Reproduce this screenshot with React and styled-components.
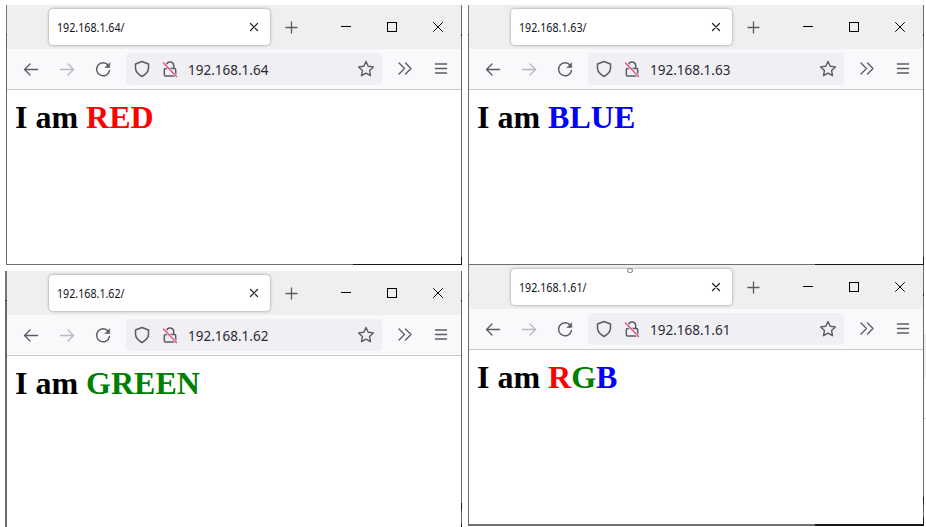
import React from "react";
import styled, { createGlobalStyle } from "styled-components";

const GlobalStyle = createGlobalStyle`
  body { margin: 0; background: #fff; overflow: hidden; }
  * { box-sizing: border-box; }
`;

const Desktop = styled.main`
  display: flex;
  width: 926px;
  height: 527px;
  padding-top: 5px;
  overflow: hidden;
  background: #fff;
`;

const Column = styled.div`
  display: flex;
  flex-direction: column;
  align-items: flex-end;
  width: ${(p) => p.$width}px;
  gap: ${(p) => p.$gap || 0}px;
  flex: none;

  & + & { margin-left: 6px; }
`;

const BackgroundSliver = styled.div`
  width: 2px;
  height: 85px;
  margin-top: 329px;
  border-bottom: 1px solid #cfcfd2;
  background: linear-gradient(#efefef 44px, #f9f9fb 44px);
`;

const WindowFrame = styled.section`
  display: flex;
  flex: none;
  width: ${(p) => 455 + p.$left}px;
  height: ${(p) => p.$height}px;
`;

const LeftEdge = styled.div`
  flex: none;
  width: ${(p) => p.$size}px;
  background: linear-gradient(#77777b 29px, #333 29px, #333 30px, #6a6a6e 30px);
`;

const RightEdge = styled.div`
  flex: none;
  width: 1px;
  background: ${(p) =>
    p.$low
      ? "linear-gradient(#6a6a6e 29px, #222 29px, #222 31px, #6a6a6e 31px, #6a6a6e 232px, #18181c 232px, #18181c 237px, #6a6a6e 242px, #6a6a6e 252px, #18181c 253px)"
      : "linear-gradient(#6a6a6e 29px, #222 29px, #222 31px, #6a6a6e 31px, #6a6a6e 252px, #18181c 252px)"};
`;

const WindowBody = styled.div`
  display: flex;
  flex-direction: column;
  width: 454px;
  background: #fff;
`;

const TabBar = styled.header`
  position: relative;
  display: flex;
  align-items: center;
  flex: none;
  height: 44px;
  padding-left: 42px;
  background: #efefef;
`;

const Tab = styled.div`
  display: flex;
  align-items: center;
  justify-content: space-between;
  width: 222px;
  height: 36px;
  padding: 0 6px 0 8px;
  border-radius: 4px;
  background: #fff;
  box-shadow: 0 0 3px rgba(0, 0, 0, 0.42);
`;

const TabTitle = styled.span`
  padding-top: 1px;
  color: #15141a;
  font: 12px/18px "Noto Sans", sans-serif;
  white-space: nowrap;
  transform: scaleX(0.89);
  transform-origin: left center;
`;

const Icon = styled.svg`
  display: block;
  flex: none;
  width: 20px;
  height: 20px;
  fill: none;
  stroke: ${(p) => p.$color || "#5b5b66"};
  stroke-width: ${(p) => p.$weight || 1.4};
  stroke-linecap: round;
  stroke-linejoin: round;
`;

const NewTab = styled.div`
  width: 53px;
  padding-left: 11px;
`;

const WindowControls = styled.div`
  display: flex;
`;

const Control = styled.div`
  display: flex;
  justify-content: center;
  width: 46px;
`;

const DragHandle = styled.i`
  position: absolute;
  top: 3px;
  left: 158px;
  width: 6px;
  height: 5px;
  border: 1px solid #8b8b93;
  border-radius: 50%;
`;

const Toolbar = styled.nav`
  display: flex;
  align-items: center;
  flex: none;
  height: 41px;
  padding: 0 0 1px 14px;
  border-bottom: 1px solid #c9c9cd;
  background: #f9f9fc;
`;

const Navigation = styled.div`
  display: flex;
  gap: 16px;
  width: 105px;
`;

const AddressField = styled.div`
  display: flex;
  align-items: center;
  width: 256px;
  height: 32px;
  padding: 0 6px;
  border-radius: 4px;
  background: #f0f0f4;
`;

const SiteIcons = styled.div`
  display: flex;
  gap: 8px;
  width: 56px;
`;

const Address = styled.span`
  flex: 1;
  padding-top: 2px;
  color: #2b2a33;
  font: 13.5px/20px "Noto Sans", sans-serif;
  white-space: nowrap;
`;

const ToolbarActions = styled.div`
  display: flex;
  gap: 16px;
  padding-left: 13px;
`;

const Heading = styled.h1`
  margin: 9px 0 0 8px;
  color: #000;
  font: bold 32px/36px "Liberation Serif", serif;
  white-space: pre;
`;

const Tint = styled.span`
  color: ${(p) => p.$color};
`;

const BottomEdge = styled.div`
  flex: none;
  align-self: flex-end;
  width: 456px;
  height: ${(p) => p.$size}px;
  background: linear-gradient(90deg, #6f6f73 347px, #18181c 347px);
`;

function BrowserWindow({ ip, words, left = 1, height, low, handle }) {
  return (
    <WindowFrame $left={left} $height={height}>
      <LeftEdge $size={left} />
      <WindowBody>
        <TabBar>
          <Tab>
            <TabTitle>{ip}/</TabTitle>
            <Icon viewBox="0 0 20 20" $color="#222" $weight={1.2}>
              <path d="m6.500 6.500 7 7m0-7-7 7" />
            </Icon>
          </Tab>
          <NewTab>
            <Icon viewBox="0 0 20 20" $weight={1.3}>
              <path d="M10.500 5v11M5 10.500h11" />
            </Icon>
          </NewTab>
          <WindowControls>
            <Control>
              <Icon viewBox="0 0 20 20" $color="#000" $weight={1} shapeRendering="crispEdges">
                <path d="M5.500 9.500h9" />
              </Icon>
            </Control>
            <Control>
              <Icon viewBox="0 0 20 20" $color="#000" $weight={1} shapeRendering="crispEdges">
                <path d="M5.500 5.500h9v9h-9z" />
              </Icon>
            </Control>
            <Control>
              <Icon viewBox="0 0 20 20" $color="#000" $weight={1}>
                <path d="m5.500 5.500 9 9m0-9-9 9" />
              </Icon>
            </Control>
          </WindowControls>
          {handle && <DragHandle />}
        </TabBar>
        <Toolbar>
          <Navigation>
            <Icon viewBox="0 0 20 20">
              <path d="M16.500 10.500h-13M9 5l-5.500 5.500L9 16" />
            </Icon>
            <Icon viewBox="0 0 20 20" $color="#b9b9bf">
              <path d="M3.500 10.500h13M11 5l5.500 5.500L11 16" />
            </Icon>
            <Icon viewBox="0 0 20 20">
              <path d="M15.200 6.200A6.500 6.500 0 1 0 16.500 11.500" />
              <path d="M16.700 4v4.500H12.200z" fill="#5b5b66" strokeWidth=".6" />
            </Icon>
          </Navigation>
          <AddressField>
            <SiteIcons>
              <Icon viewBox="0 0 20 20" $weight={1.5}>
                <path d="M10 2.500 16.500 5v4c0 3.600-2.500 6.300-6.500 8.500C6 15.300 3.500 12.600 3.500 9V5z" />
              </Icon>
              <Icon viewBox="0 0 20 20" $weight={1.5}>
                <path d="M6 9.500h8.500q1.200 0 1.200 1.200v5q0 1.300-1.200 1.300h-9q-1.200 0-1.200-1.300v-5q0-1.200 1.200-1.200M6.500 5.500a3.700 3.700 0 0 1 7.200 1v3" />
                <path d="m3.500 4 13 13.500" stroke="#f0f0f4" strokeWidth="2.600" />
                <path d="m3.500 4 13 13.500" stroke="#e2486a" strokeWidth="1.200" />
              </Icon>
            </SiteIcons>
            <Address>{ip}</Address>
            <Icon viewBox="0 0 20 20">
              <path d="m10 2.500 2.200 4.800 5.200.6-3.900 3.500 1 5.300L10 14.100l-4.500 2.600 1-5.300-3.900-3.500 5.200-.6z" />
            </Icon>
          </AddressField>
          <ToolbarActions>
            <Icon viewBox="0 0 20 20">
              <path d="m4 4 5.500 5.500L4 15M10.500 4l5.500 5.500-5.500 5.500" />
            </Icon>
            <Icon viewBox="0 0 20 20" $weight={1.4}>
              <path d="M4.500 5h11m-11 4.500h11m-11 4.500h11" />
            </Icon>
          </ToolbarActions>
        </Toolbar>
        <Heading>
          I am {words.map(([text, color]) => <Tint key={text} $color={color}>{text}</Tint>)}
        </Heading>
      </WindowBody>
      <RightEdge $low={low} />
    </WindowFrame>
  );
}

export default function App() {
  return (
    <>
      <GlobalStyle />
      <Desktop>
        <Column $width={462} $gap={6}>
          <div>
            <BrowserWindow ip="192.168.1.64" words={[["RED", "#f00"]]} height={259} />
            <BottomEdge $size={1} />
          </div>
          <BrowserWindow ip="192.168.1.62" words={[["GREEN", "#008000"]]} left={2} height={256} low />
        </Column>
        <Column $width={456}>
          <BrowserWindow ip="192.168.1.63" words={[["BLUE", "#00f"]]} height={259} />
          <BottomEdge $size={1} />
          <BrowserWindow
            ip="192.168.1.61"
            words={[["R", "#f00"], ["G", "#008000"], ["B", "#00f"]]}
            height={259}
            low
            handle
          />
          <BottomEdge $size={2} />
        </Column>
        <BackgroundSliver />
      </Desktop>
    </>
  );
}
